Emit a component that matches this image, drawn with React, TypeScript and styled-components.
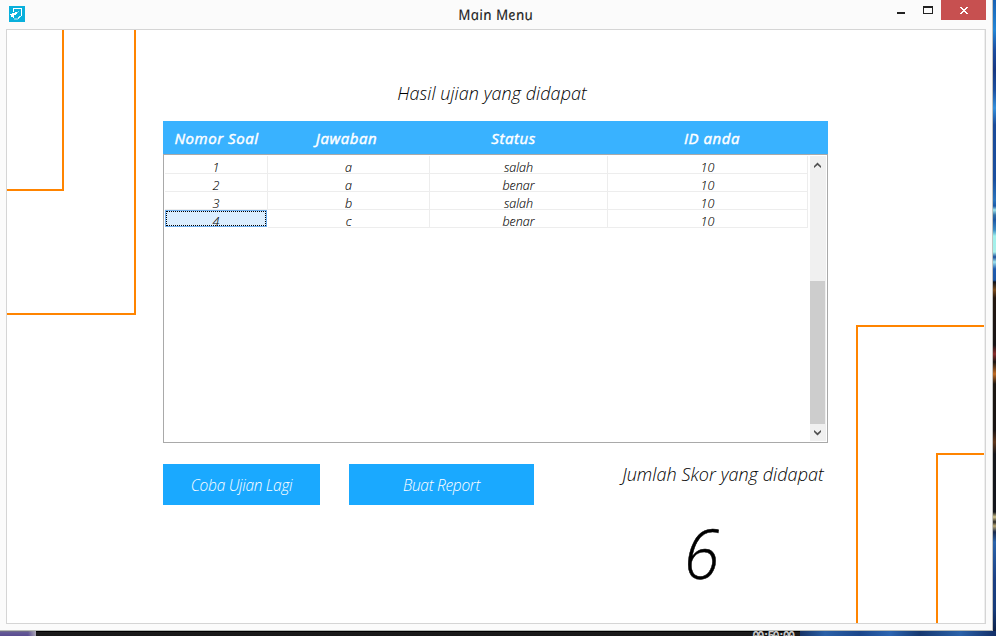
import React from "react";
import styled, { createGlobalStyle, css } from "styled-components";

const GlobalStyle = createGlobalStyle`
  * { box-sizing: border-box; }
  html, body { margin: 0; padding: 0; overflow: hidden; }
  body { font-family: "Open Sans", "Noto Sans", sans-serif; color: #000; }
  button { font: inherit; border: 0; padding: 0; margin: 0; background: none; }
`;

const Desktop = styled.div`
  display: grid;
  grid-template-columns: 993px 3px;
  grid-template-rows: 631px 5px;
  width: 996px;
  height: 636px;
  overflow: hidden;
`;

const WallpaperEdge = styled.div`
  background: linear-gradient(
    180deg,
    #1a62b4 0, #2386d6 30px, #1b4da0 50px, #173782 70px, #1c4f9f 90px,
    #3490dc 108px, #1b4a99 125px, #1a4f9f 180px, #2a74bd 200px,
    #1b59a8 206px, #9fe4ec 210px, #3573a8 215px, #1d57a4 220px,
    #3e8fc6 230px, #a0f1ec 236px, #a8f0ea 252px, #1c4f9c 257px,
    #a0e4ee 262px, #1f5bb0 269px, #1c58a8 280px, #10131c 282px,
    #7c4c1c 290px, #241710 298px, #171416 345px, #8a2c2c 354px,
    #1a1512 362px, #c06a22 374px, #1d1712 384px, #171313 430px,
    #60371c 442px, #15161a 454px, #12151b 512px, #d2c58e 517px,
    #2b2a28 522px, #b9a874 526px, #1a2a4c 532px, #2a63ab 542px,
    #1b3f83 580px, #173b7a 610px, #0d2149 631px
  );
`;

const Taskbar = styled.div`
  grid-column: 1 / -1;
  display: flex;
  overflow: hidden;
`;

const TaskItem = styled.div`
  width: 36px;
  background: linear-gradient(90deg, transparent 28px, #aaa5b5 36px),
    linear-gradient(180deg, #777 0, #655b98 1px, #594b90 5px);
`;

const TaskStrip = styled.div`
  display: flex;
  justify-content: flex-end;
  width: 764px;
  padding-right: 7px;
  background: linear-gradient(180deg, #000 0, #000 1px, #1c1c1c 1px, #191919 5px);
`;

const Clock = styled.span`
  font: 700 12px/13px "Liberation Mono", monospace;
  letter-spacing: -2.1px;
  color: #c9c9c9;
`;

const TaskWallpaper = styled.div`
  flex: 1;
  background: linear-gradient(90deg, #173466, #2a60a8 25px, #1b468a 60px, #2c65b2 90px, #16386f 120px, #2b62aa 160px, #122e66);
`;

const Window = styled.div`
  display: flex;
  flex-direction: column;
  background: #fbfbfb;
  border-right: 1px solid #c3c3c0;
  border-bottom: 1px solid #b7bbb7;
`;

const TitleBar = styled.header`
  display: grid;
  grid-template-columns: 458px 1fr auto;
  height: 29px;
`;

const AppIcon = styled.svg`
  display: block;
  margin: 6px 0 0 9px;
`;

const Title = styled.div`
  justify-self: start;
  font-style: italic;
  transform: skewX(11deg);
  font-size: 14.5px;
  line-height: 29px;
  color: #1c1c1c;
  letter-spacing: 0.3px;
  -webkit-text-stroke: 0.15px #1c1c1c;
  white-space: nowrap;
`;

const WindowControls = styled.div`
  display: flex;
  margin-right: 6px;
`;

const ControlButton = styled.button<{ $close?: boolean }>`
  display: flex;
  align-items: center;
  justify-content: center;
  width: ${(p) => (p.$close ? 45 : 27)}px;
  height: 20px;
  background: ${(p) => (p.$close ? "#c75050" : "transparent")};
`;

const Client = styled.main`
  display: flex;
  justify-content: space-between;
  width: 980px;
  height: 595px;
  margin-left: 6px;
  background: #fff;
  border: 1px solid #d5d5d5;
  box-shadow: inset -1px 0 #efefef;
  padding-right: 1px;
`;

const Frame = styled.div<{ $w: number; $h: number; $corner: "start" | "end" }>`
  display: flex;
  flex: none;
  width: ${(p) => p.$w}px;
  height: ${(p) => p.$h}px;
  align-self: flex-${(p) => p.$corner};
  align-items: flex-${(p) => p.$corner};
  justify-content: flex-${(p) => p.$corner};
  border: 0 solid #ff8400;
  border-width: ${(p) => (p.$corner === "start" ? "0 2px 2px 0" : "2px 0 0 2px")};
`;

const Content = styled.section`
  display: flex;
  flex-direction: column;
  width: 665px;
  margin-right: 1px;
`;

const Caption = styled.h2`
  margin: 0;
  font-size: 18px;
  font-weight: 300;
  font-style: italic;
  line-height: 26px;
  letter-spacing: 0.06px;
  white-space: nowrap;
  text-align: center;
`;

const Heading = styled(Caption)`
  margin: 50px 7px 15px 0;
`;

const HeaderRow = styled.div`
  display: grid;
  grid-template-columns: 107px 153px 181px 216px;
  height: 33px;
  background: #39b2ff;
`;

const HeaderCell = styled.div`
  text-align: center;
  font-size: 15px;
  font-weight: 400;
  font-style: italic;
  line-height: 35px;
  letter-spacing: 0.55px;
  -webkit-text-stroke: 0.45px #fff;
  color: #fff;
  white-space: nowrap;
`;

const TableBox = styled.div`
  display: flex;
  justify-content: space-between;
  height: 289px;
  padding: 1px;
  border: 1px solid #a9a9a9;
`;

const Rows = styled.div`
  display: flex;
  flex-direction: column;
`;

const Row = styled.div`
  display: grid;
  grid-template-columns: 103px 162px 178px 200px;
  height: 18px;
`;

const Cell = styled.div<{ $selected?: boolean }>`
  border-right: 1px solid #ededed;
  border-bottom: 1px solid #ededed;
  text-align: center;
  font-size: 12.5px;
  font-weight: 300;
  font-style: italic;
  line-height: 23px;
  -webkit-text-stroke: 0.1px #000;
  height: 18px;
  ${(p) =>
    p.$selected &&
    css`
      border: 0;
      width: 102px;
      height: 17px;
      background: #dbeeff;
      outline: 1px dotted #000;
      outline-offset: -2px;
      box-shadow: inset 0 0 0 1px #6fb0f0;
    `}
`;

const Scrollbar = styled.div`
  display: flex;
  flex-direction: column;
  align-items: center;
  width: 16px;
  height: 285px;
  background: #f0f0f0;
`;

const ScrollArrow = styled.svg`
  display: block;
  width: 16px;
  height: 17px;
`;

const ScrollThumb = styled.div`
  width: 15px;
  height: 143px;
  margin-top: auto;
  align-self: flex-start;
  background: #cdcdcd;
`;

const Footer = styled.div`
  display: flex;
  align-items: flex-start;
  margin-top: 21px;
`;

const ActionButton = styled.button<{ $w: number }>`
  width: ${(p) => p.$w}px;
  height: 41px;
  margin-right: 29px;
  background: #1aa9ff;
  color: #fff;
  font-size: 15.5px;
  font-weight: 300;
  font-style: italic;
  line-height: 43px;
  letter-spacing: -0.3px;
  white-space: nowrap;
`;

const ScoreBlock = styled.div`
  display: flex;
  flex-direction: column;
  align-items: center;
  width: 204px;
  margin: -3px 3px 0 auto;
`;

const Score = styled.div`
  font-size: 68px;
  font-weight: 300;
  font-style: italic;
  line-height: 80px;
  margin: 26px 42px 0 0;
  transform: scaleX(0.94);
  -webkit-text-stroke: 0.5px #000;
`;

const headers = ["Nomor Soal", "Jawaban", "Status", "ID anda"];
const answers = [
  ["1", "a", "salah", "10"],
  ["2", "a", "benar", "10"],
  ["3", "b", "salah", "10"],
  ["4", "c", "benar", "10"],
];

export default function App() {
  return (
    <Desktop>
      <GlobalStyle />
      <Window>
        <TitleBar>
          <AppIcon width="16" height="16" viewBox="0 0 16 16" shapeRendering="crispEdges">
            <rect width="16" height="16" fill="#09b0dc" />
            <path d="M4 2h9v8h-1V3H5v3H4zM4 10h1v2H4z" fill="#fff" />
            <path d="M1 8h2V7h3V6h2v2H7v1H5v1H4v1H2V9H1z" fill="#fff" />
            <path d="M9 5h1v1H9zM8 6h1v1H8z" fill="#8adcf0" />
            <path d="M5 12h4v2H5z" fill="#67cde8" />
            <path d="M10 10h2v1h-1v1h-1v1H9v-2h1z" fill="#d5f2fa" />
          </AppIcon>
          <Title>Main Menu</Title>
          <WindowControls>
            <ControlButton aria-label="Minimize">
              <svg width="27" height="20" shapeRendering="crispEdges">
                <path d="M10 12h8v2h-8z" fill="#222" />
              </svg>
            </ControlButton>
            <ControlButton aria-label="Maximize">
              <svg width="27" height="20" shapeRendering="crispEdges">
                <path d="M9 6h10v8H9zM10 8v5h8V8z" fill="#222" fillRule="evenodd" />
              </svg>
            </ControlButton>
            <ControlButton $close aria-label="Close">
              <svg width="8" height="7" shapeRendering="crispEdges">
                <path
                  d="M0 0h2v1h1v1h2V1h1V0h2v1H7v1H6v1H5v1h1v1h1v1h1v1H6V6H5V5H3v1H2v1H0V6h1V5h1V4h1V3H2V2H1V1H0z"
                  fill="#fff"
                />
              </svg>
            </ControlButton>
          </WindowControls>
        </TitleBar>
        <Client>
          <Frame $w={129} $h={285} $corner="start">
            <Frame $w={57} $h={161} $corner="start" />
          </Frame>
          <Content>
            <Heading as="h1">Hasil ujian yang didapat</Heading>
            <HeaderRow>
              {headers.map((h) => (
                <HeaderCell key={h}>{h}</HeaderCell>
              ))}
            </HeaderRow>
            <TableBox>
              <Rows>
                {answers.map((row, r) => (
                  <Row key={r}>
                    {row.map((value, c) => (
                      <Cell key={c} $selected={r === 3 && c === 0}>
                        {value}
                      </Cell>
                    ))}
                  </Row>
                ))}
              </Rows>
              <Scrollbar>
                <ScrollArrow viewBox="0 0 16 17">
                  <path d="M4 12v-1.9l3.5-3.5L11 10.1V12L7.5 9.1z" fill="#505050" />
                </ScrollArrow>
                <ScrollThumb />
                <ScrollArrow viewBox="0 0 16 17">
                  <path d="M4 6v1.9l3.5 3.5L11 7.9V6L7.5 8.9z" fill="#505050" />
                </ScrollArrow>
              </Scrollbar>
            </TableBox>
            <Footer>
              <ActionButton $w={157}>Coba Ujian Lagi</ActionButton>
              <ActionButton $w={185}>Buat Report</ActionButton>
              <ScoreBlock>
                <Caption>Jumlah Skor yang didapat</Caption>
                <Score>6</Score>
              </ScoreBlock>
            </Footer>
          </Content>
          <Frame $w={128} $h={298} $corner="end">
            <Frame $w={48} $h={170} $corner="end" />
          </Frame>
        </Client>
      </Window>
      <WallpaperEdge />
      <Taskbar>
        <TaskItem />
        <TaskStrip>
          <Clock>00:50:00</Clock>
        </TaskStrip>
        <TaskWallpaper />
      </Taskbar>
    </Desktop>
  );
}
